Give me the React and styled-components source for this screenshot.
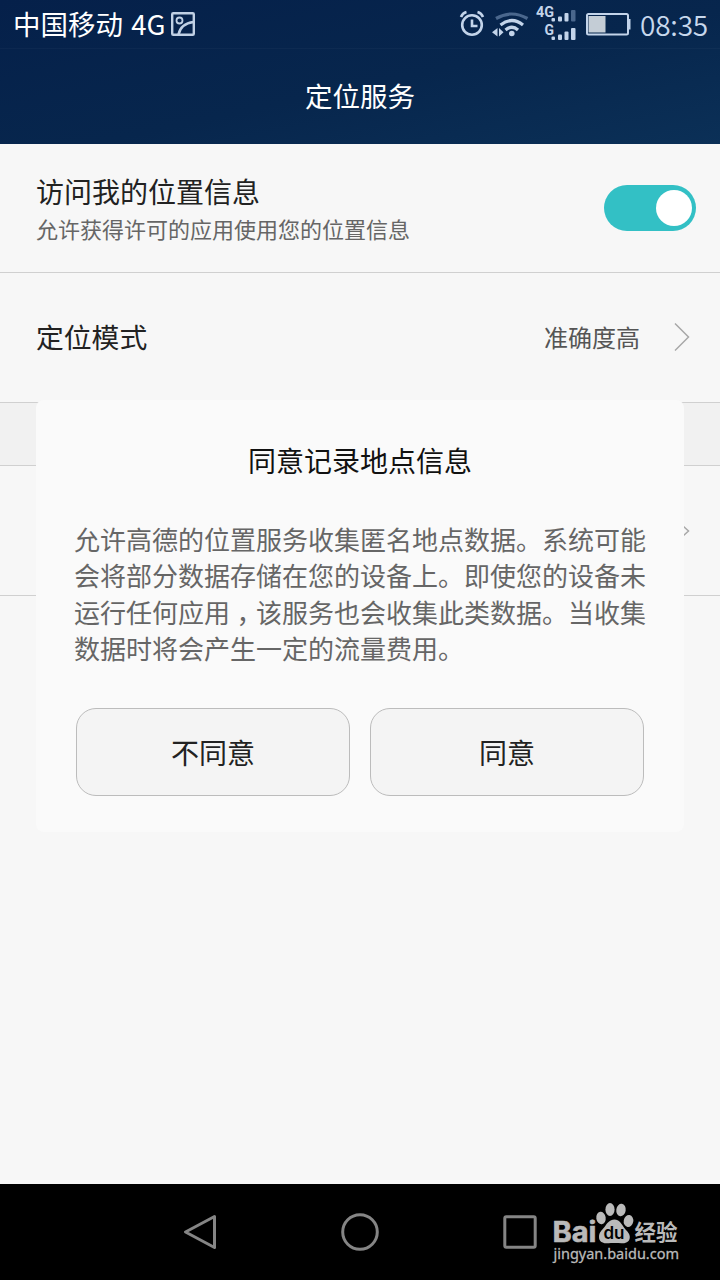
import React from 'react';
import styled, { createGlobalStyle } from 'styled-components';

const GlobalStyle = createGlobalStyle`
  * {
    box-sizing: border-box;
  }
  body {
    margin: 0;
    background: #f7f7f7;
    font-family: "Noto Sans CJK SC", "Noto Sans", sans-serif;
  }
`;

const Screen = styled.div`
  position: relative;
  display: flex;
  flex-direction: column;
  width: 720px;
  height: 1280px;
  overflow: hidden;
  background: #f7f7f7;
`;

const Header = styled.header`
  height: 144px;
  background: linear-gradient(168deg, #05204a 0%, #07264d 55%, #0b3057 100%);
`;

const StatusBar = styled.div`
  display: flex;
  align-items: center;
  height: 49px;
  padding: 0 11px 0 13px;
  border-bottom: 1px solid rgba(255, 255, 255, 0.03);
`;

const Carrier = styled.span`
  margin-right: 6px;
  padding-bottom: 2px;
  color: #fff;
  font-size: 27.5px;
  line-height: 46px;
  white-space: pre;
  word-spacing: 2px;
`;

const StatusIcons = styled.div`
  display: flex;
  margin-left: auto;
`;

const Time = styled.span`
  width: 69px;
  margin-left: 8px;
  color: #c8d8ec;
  font-size: 28px;
  font-weight: 350;
  line-height: 48px;
  letter-spacing: -0.2px;
  padding-bottom: 1px;
`;

const Title = styled.h1`
  margin: 0;
  color: #fff;
  font-size: 27.5px;
  font-weight: 400;
  line-height: 93px;
  text-align: center;
`;

const Row = styled.div`
  display: flex;
  align-items: center;
  height: ${({ $height }) => $height}px;
  padding: 0 ${({ $right }) => $right || 24}px 0 36px;
  border-bottom: 1px solid #d0d0d0;
`;

const ModeRow = styled(Row)`
  padding-bottom: 2px;
`;

const Texts = styled.div`
  flex: 1;
`;

const Label = styled.div`
  padding-top: 1px;
  color: #222;
  font-size: 28px;
  line-height: 40px;
`;

const ModeLabel = styled(Label)`
  padding: 0 0 2px;
  font-size: 27.8px;
`;

const Hint = styled.div`
  color: #666;
  font-size: 22px;
  line-height: 35px;
`;

const Value = styled.div`
  margin-right: 34px;
  color: #555;
  font-size: 24px;
`;

const Switch = styled.div`
  display: flex;
  justify-content: flex-end;
  align-items: center;
  width: 92px;
  height: 46px;
  padding: 0 4px;
  border-radius: 23px;
  background: #33c0c5;
`;

const Knob = styled.div`
  width: 36px;
  height: 36px;
  border-radius: 50%;
  background: #fff;
`;

const Band = styled.div`
  height: 63px;
  border-bottom: 1px solid #d0d0d0;
  background: #f1f1f1;
`;

const Dialog = styled.div`
  position: absolute;
  top: 400px;
  left: 36px;
  width: 648px;
  height: 432px;
  padding: 39px 40px 0;
  border-radius: 8px;
  background: #fafafa;
`;

const DialogTitle = styled.h2`
  margin: 0;
  color: #111;
  font-size: 28px;
  font-weight: 400;
  line-height: 42px;
  text-align: center;
`;

const DialogText = styled.p`
  margin: 40px -4px 0 -2px;
  color: #666;
  font-size: 26px;
  line-height: 36.4px;
  white-space: pre;
`;

/* half-width comma centred in a full-width cell */
const Comma = styled.span`
  display: inline-block;
  width: 26px;
  font-feature-settings: "halt";
  text-align: center;
`;

const Buttons = styled.div`
  display: flex;
  gap: 20px;
  margin-top: 41px;
`;

const Button = styled.button`
  flex: 1;
  height: 88px;
  padding: 0;
  border: 1px solid #bcbcbc;
  border-radius: 20px;
  background: #f4f4f4;
  color: #222;
  font-family: inherit;
  font-size: 28px;
  font-weight: 400;
`;

const NavBar = styled.nav`
  display: flex;
  align-items: center;
  gap: 120px;
  height: 96px;
  margin-top: auto;
  padding-left: 180px;
  background: #000;
`;

const Watermark = styled.div`
  position: absolute;
  left: 550px;
  bottom: 14px;
  width: 134px;
  height: 66px;
`;

const PictureIcon = () => (
  <svg width="24" height="24" viewBox="0 0 24 24" fill="none" stroke="#c0d0e4">
    <rect x="1.2" y="1.2" width="21.6" height="21.6" rx="1" strokeWidth="2.4" />
    <circle cx="8.5" cy="8.5" r="3" strokeWidth="1.8" />
    <path d="M7.500 22.500C9 15.500 14 11 22.500 10" strokeWidth="2.6" />
  </svg>
);

const SystemIcons = () => (
  <svg width="174" height="48" viewBox="458 0 174 48" fill="none" stroke="#c3d4ea">
    {/* alarm */}
    <circle cx="472" cy="25" r="9.8" strokeWidth="2.6" />
    <path d="M472 19.5v6.5h5.5" strokeWidth="2.6" />
    <path d="M461 17q1.5-4 5.5-5M483 17q-1.5-4-5.5-5" strokeWidth="2.6" />
    {/* wifi */}
    <path d="M496 18.500q15.500-9 31.500 0" stroke="#4a678d" strokeWidth="3.2" />
    <path d="M500.500 25q11.500-9 22.500 0" strokeWidth="3.2" />
    <path d="M505.500 30q6.500-5.500 12.500 0" strokeWidth="3.2" />
    <g fill="#c3d4ea" stroke="none">
      <circle cx="511.800" cy="33.500" r="2.800" />
      <path d="M497.500 28v8.500l-5.500-4.200zM499 28v8.500l4.500-4.200z" />
      {/* signals */}
      <rect x="551.500" y="18" width="3.500" height="3.500" rx="1" />
      <rect x="558" y="16.500" width="4" height="5" rx="1" />
      <rect x="564.500" y="13" width="4" height="8.500" rx="1" />
      <rect x="571" y="10" width="4.500" height="11.500" rx="1" fill="#4a678d" />
      <rect x="551.500" y="36.500" width="3.500" height="3.500" rx="1" />
      <rect x="558" y="34.500" width="4" height="5.500" rx="1" />
      <rect x="564.500" y="31.500" width="4" height="8.500" rx="1" />
      <rect x="571" y="28" width="4.500" height="12" rx="1" />
      <text x="536" y="17" fontFamily="Roboto, sans-serif" fontSize="14" fontWeight="700" textLength="18" lengthAdjust="spacingAndGlyphs">4G</text>
      <text x="544.500" y="34.500" fontFamily="Roboto, sans-serif" fontSize="14" fontWeight="700" textLength="9.500" lengthAdjust="spacingAndGlyphs">G</text>
      {/* battery */}
      <rect x="588.500" y="16" width="17" height="16.500" fill="#c4cdd6" />
      <path d="M628 19h2.500v10.500H628z" />
    </g>
    <rect x="587" y="14" width="41" height="20.500" rx="1.500" strokeWidth="2" />
  </svg>
);

const Arrow = () => (
  <svg width="16" height="30" viewBox="0 0 16 30" fill="none" stroke="#a8a8a8" strokeWidth="1.5">
    <path d="M1 1.500L14.500 15L1 28.500" />
  </svg>
);

const SmallArrow = () => (
  <svg width="8" height="12" viewBox="0 0 8 12" fill="none" stroke="#a8a8a8" strokeWidth="1.5">
    <path d="M1 1L6.500 6L1 11" />
  </svg>
);

const NavIcon = ({ children }) => (
  <svg width="40" height="40" viewBox="0 0 40 40" fill="none" stroke="#858585" strokeWidth="3" strokeLinejoin="round">
    {children}
  </svg>
);

const BaiduLogo = () => (
  <svg width="134" height="66" viewBox="550 1200 134 66" fill="#bababa">
    <text x="552.500" y="1242" fontFamily="Inter, sans-serif" fontSize="28" fontWeight="700" textLength="44" lengthAdjust="spacingAndGlyphs" stroke="#bababa" strokeWidth="0.600">Bai</text>
    <ellipse cx="601" cy="1218" rx="4.700" ry="6.200" transform="rotate(-8 601 1218)" />
    <ellipse cx="610" cy="1209.500" rx="4.600" ry="6.400" />
    <ellipse cx="621" cy="1210" rx="4.700" ry="6.300" transform="rotate(8 621 1210)" />
    <ellipse cx="628.500" cy="1221" rx="4.800" ry="6" transform="rotate(10 628.500 1221)" />
    <path d="M614.500 1219.500c-5 0-7.500 4-10 7.500-3 3.500-5.500 5.500-5.500 10 0 4.500 3.500 6.500 8 6.200 4-.3 10-.5 14.500 0 5 .5 8.500-2 8.300-6.500-.2-4-3.500-6-6-9.500-2.500-3.500-4.500-7.700-9.300-7.700z" />
    <text x="603.500" y="1239" fill="#000" fontFamily="Inter, sans-serif" fontSize="17.500" fontWeight="600" textLength="21" lengthAdjust="spacingAndGlyphs">du</text>
    <text x="634.500" y="1240" fontFamily="Noto Sans CJK SC, sans-serif" fontSize="21.500" fontWeight="700">经验</text>
    <text x="553.500" y="1259" fontFamily="Noto Sans, sans-serif" fontSize="14.500" textLength="125.500" lengthAdjust="spacingAndGlyphs" stroke="#bababa" strokeWidth="0.300">jingyan.baidu.com</text>
  </svg>
);

const App = () => (
  <>
    <GlobalStyle />
    <Screen>
      <Header>
        <StatusBar>
          <Carrier>中国移动 4G</Carrier>
          <PictureIcon />
          <StatusIcons>
            <SystemIcons />
          </StatusIcons>
          <Time>08:35</Time>
        </StatusBar>
        <Title>定位服务</Title>
      </Header>
      <Row $height={129}>
        <Texts>
          <Label>访问我的位置信息</Label>
          <Hint>允许获得许可的应用使用您的位置信息</Hint>
        </Texts>
        <Switch>
          <Knob />
        </Switch>
      </Row>
      <ModeRow $height={130} $right={30}>
        <Texts>
          <ModeLabel>定位模式</ModeLabel>
        </Texts>
        <Value>准确度高</Value>
        <Arrow />
      </ModeRow>
      <Band />
      <Row $height={130} $right={30}>
        <Texts />
        <SmallArrow />
      </Row>
      <NavBar>
        <NavIcon>
          <path d="M34.500 15.500V4.500L5.500 20L34.500 35.500Z" />
        </NavIcon>
        <NavIcon>
          <circle cx="20" cy="20" r="17.300" />
        </NavIcon>
        <NavIcon>
          <rect x="4.800" y="4.800" width="30.400" height="30.400" rx="1.500" />
        </NavIcon>
      </NavBar>
      <Dialog>
        <DialogTitle>同意记录地点信息</DialogTitle>
        <DialogText>
          {'允许高德的位置服务收集匿名地点数据。系统可能\n会将部分数据存储在您的设备上。即使您的设备未\n运行任何应用'}
          <Comma>{'\uff0c'}</Comma>
          {'该服务也会收集此类数据。当收集\n数据时将会产生一定的流量费用。'}
        </DialogText>
        <Buttons>
          <Button>不同意</Button>
          <Button>同意</Button>
        </Buttons>
      </Dialog>
      <Watermark>
        <BaiduLogo />
      </Watermark>
    </Screen>
  </>
);

export default App;
